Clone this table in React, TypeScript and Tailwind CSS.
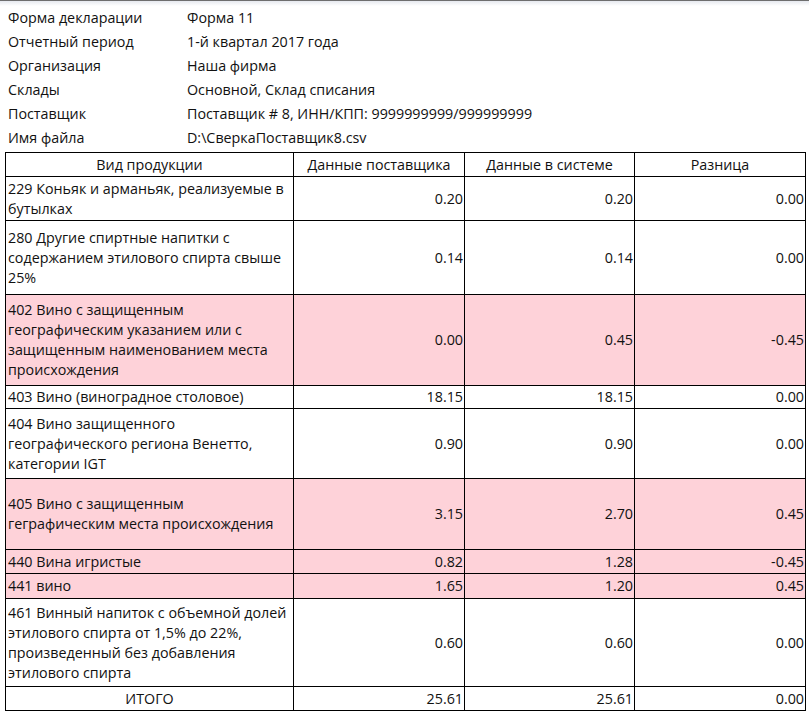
const info: [string, string][] = [
  ['Форма декларации', 'Форма 11'],
  ['Отчетный период', '1-й квартал 2017 года'],
  ['Организация', 'Наша фирма'],
  ['Склады', 'Основной, Склад списания'],
  ['Поставщик', 'Поставщик # 8, ИНН/КПП: 9999999999/999999999'],
  ['Имя файла', 'D:\\СверкаПоставщик8.csv'],
];

type Row = { name: string; sup: string; sys: string; diff: string; h: string; bad?: boolean };

const rows: Row[] = [
  { name: '229 Коньяк и арманьяк, реализуемые в бутылках', sup: '0.20', sys: '0.20', diff: '0.00', h: 'h-[44px]' },
  { name: '280 Другие спиртные напитки с содержанием этилового спирта свыше 25%', sup: '0.14', sys: '0.14', diff: '0.00', h: 'h-[74px]' },
  { name: '402 Вино с защищенным географическим указанием или с защищенным наименованием места происхождения', sup: '0.00', sys: '0.45', diff: '-0.45', h: 'h-[91px]', bad: true },
  { name: '403 Вино (виноградное столовое)', sup: '18.15', sys: '18.15', diff: '0.00', h: 'h-[23px]' },
  { name: '404 Вино защищенного географического региона Венетто, категории IGT', sup: '0.90', sys: '0.90', diff: '0.00', h: 'h-[70px]' },
  { name: '405 Вино с защищенным геграфическим места происхождения', sup: '3.15', sys: '2.70', diff: '0.45', h: 'h-[71px]', bad: true },
  { name: '440 Вина игристые', sup: '0.82', sys: '1.28', diff: '-0.45', h: 'h-[24px]', bad: true },
  { name: '441 вино', sup: '1.65', sys: '1.20', diff: '0.45', h: 'h-[25px]', bad: true },
  { name: '461 Винный напиток с объемной долей этилового спирта от 1,5% до 22%, произведенный без добавления этилового спирта', sup: '0.60', sys: '0.60', diff: '0.00', h: 'h-[88px]' },
];

export default function App() {
  return (
    <div className="w-[809px] h-[717px] bg-white text-[14.3px] leading-5 text-[#111] font-['Segoe_UI','Open_Sans',sans-serif]">
      <div className="h-px bg-[#6e6e6e]" />
      <div className="h-[5px] bg-gradient-to-b from-[#e6e9ef] to-white" />

      <div className="grid grid-cols-[179px_1fr] pl-2">
        {info.map(([k, v]) => (
          <div key={k} className="contents">
            <div className="h-6 flex items-center">{k}</div>
            <div className="h-6 flex items-center">{v}</div>
          </div>
        ))}
      </div>

      <table className="ml-[5px] mt-[2px] w-[800px] border-collapse table-fixed">
        <colgroup>
          <col className="w-[288px]" />
          <col className="w-[171px]" />
          <col className="w-[170px]" />
          <col className="w-[171px]" />
        </colgroup>
        <thead>
          <tr className="h-[24px]">
            <th className="border border-black font-normal text-center">Вид продукции</th>
            <th className="border border-black font-normal text-center">Данные поставщика</th>
            <th className="border border-black font-normal text-center">Данные в системе</th>
            <th className="border border-black font-normal text-center">Разница</th>
          </tr>
        </thead>
        <tbody>
          {rows.map((r) => (
            <tr key={r.name} className={`${r.h} ${r.bad ? 'bg-[#fed2d9]' : ''}`}>
              <td className="border border-black px-[2px] align-middle">{r.name}</td>
              <td className="border border-black px-[1px] text-right align-middle">{r.sup}</td>
              <td className="border border-black px-[1px] text-right align-middle">{r.sys}</td>
              <td className="border border-black px-[1px] text-right align-middle">{r.diff}</td>
            </tr>
          ))}
          <tr className="h-[24px]">
            <td className="border border-black text-center">ИТОГО</td>
            <td className="border border-black px-[1px] text-right">25.61</td>
            <td className="border border-black px-[1px] text-right">25.61</td>
            <td className="border border-black px-[1px] text-right">0.00</td>
          </tr>
        </tbody>
      </table>
    </div>
  );
}
